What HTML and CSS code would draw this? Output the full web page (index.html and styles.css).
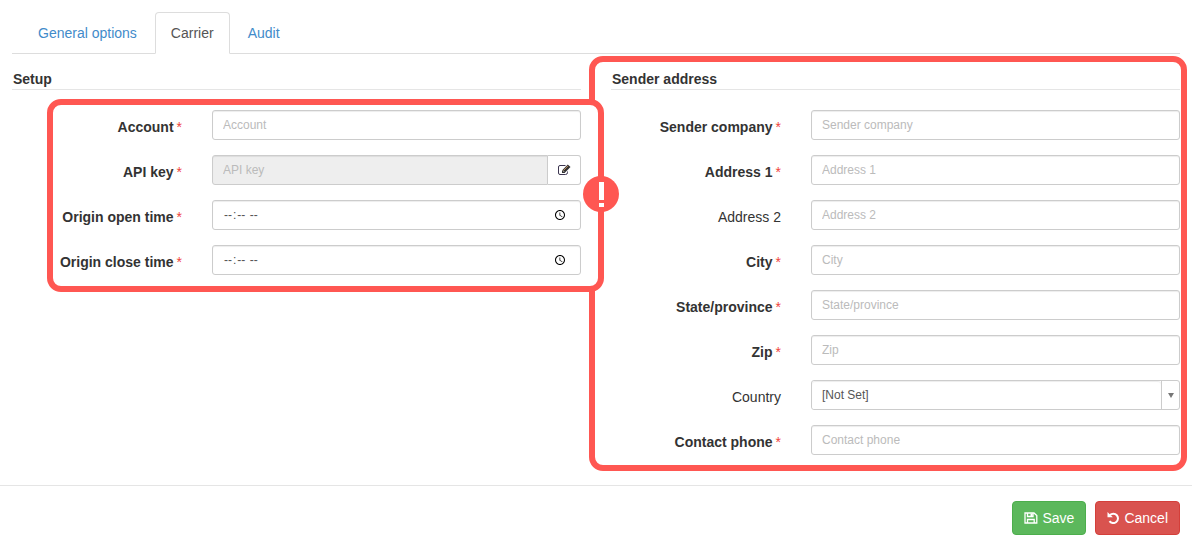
FILE: index.html
```html
<!DOCTYPE html>
<html lang="en">
<head>
  <meta charset="UTF-8">
  <meta name="viewport" content="width=device-width, initial-scale=1.0">
  <title>Carrier</title>
  <link rel="stylesheet" href="styles.css">
</head>
<body>
  <form class="page">
    <nav class="tabs">
      <a href="#general">General options</a>
      <a href="#carrier" class="active">Carrier</a>
      <a href="#audit">Audit</a>
    </nav>

    <div class="columns">
      <section class="column">
        <h2>Setup</h2>
        <div class="fields">
          <div class="row">
            <label for="account" class="required">Account</label>
            <input type="text" id="account" class="control" placeholder="Account">
          </div>
          <div class="row">
            <label for="apiKey" class="required">API key</label>
            <div class="input-group">
              <input type="text" id="apiKey" class="control" placeholder="API key" readonly>
              <button type="button" class="edit-btn" aria-label="Edit">
                <svg width="14" height="12" viewBox="0 0 14 12" fill="none">
                  <path d="M8.500 1.500H3Q1.500 1.500 1.500 3V9Q1.500 10.500 3 10.500H8.500Q10.500 10.500 10.500 8.500V7.500" stroke="#3c3550"/>
                  <path d="M5 9V6.500L10.800 0.500L13.500 3L7.600 9Z" fill="#333"/>
                  <path d="M6.500 6.500L11 1.900" stroke="#b98a5c"/>
                  <path d="M6 6.700L7.200 7.900" stroke="#fff" stroke-width="0.700"/>
                </svg>
              </button>
            </div>
          </div>
          <div class="row">
            <label for="openTime" class="required">Origin open time</label>
            <input type="time" id="openTime" class="control">
          </div>
          <div class="row">
            <label for="closeTime" class="required">Origin close time</label>
            <input type="time" id="closeTime" class="control">
          </div>
          <div class="frame frame-setup">
            <svg class="alert" width="36" height="36" viewBox="0 0 36 36">
              <circle cx="18" cy="18" r="18" fill="#ff5752"/>
              <rect x="16" y="6" width="5" height="18" fill="#fff"/>
              <rect x="16" y="27" width="5" height="4" fill="#fff"/>
            </svg>
          </div>
        </div>
      </section>

      <section class="column">
        <h2>Sender address</h2>
        <div class="fields">
          <div class="row">
            <label for="company" class="required">Sender company</label>
            <input type="text" id="company" class="control" placeholder="Sender company">
          </div>
          <div class="row">
            <label for="address1" class="required">Address 1</label>
            <input type="text" id="address1" class="control" placeholder="Address 1">
          </div>
          <div class="row">
            <label for="address2">Address 2</label>
            <input type="text" id="address2" class="control" placeholder="Address 2">
          </div>
          <div class="row">
            <label for="city" class="required">City</label>
            <input type="text" id="city" class="control" placeholder="City">
          </div>
          <div class="row">
            <label for="state" class="required">State/province</label>
            <input type="text" id="state" class="control" placeholder="State/province">
          </div>
          <div class="row">
            <label for="zip" class="required">Zip</label>
            <input type="text" id="zip" class="control" placeholder="Zip">
          </div>
          <div class="row">
            <label for="country">Country</label>
            <div class="select-box">
              <select id="country" class="control">
                <option>[Not Set]</option>
              </select>
              <span class="arrow">
                <svg width="6" height="5" viewBox="0 0 6 5"><path d="M0 0H6L3 5Z" fill="#777"/></svg>
              </span>
            </div>
          </div>
          <div class="row">
            <label for="phone" class="required">Contact phone</label>
            <input type="text" id="phone" class="control" placeholder="Contact phone">
          </div>
        </div>
        <div class="frame frame-sender"></div>
      </section>
    </div>

    <footer class="actions">
      <button type="submit" class="btn btn-save">
        <svg width="14" height="12" viewBox="0 0 14 12" fill="none" stroke="#fff" stroke-width="1.300">
          <path d="M1 1H10L12.800 3.500V11H1Z"/>
          <path d="M3.500 11V7.500H10.200V11M3.500 1V4.500H9V1"/>
          <path d="M6.500 1.500H8.500V4H6.500Z" fill="#fff" stroke="none"/>
        </svg>
        Save
      </button>
      <button type="button" class="btn btn-cancel">
        <svg width="13" height="12" viewBox="0 0 13 12">
          <path d="M3 3A4.700 4.700 0 1 1 2.500 9.200" fill="none" stroke="#fff" stroke-width="2"/>
          <path d="M0.500 0V5.300H5.800Z" fill="#fff"/>
        </svg>
        Cancel
      </button>
    </footer>
  </form>
</body>
</html>
```
FILE: styles.css
```css
* {
  box-sizing: border-box;
}
body {
  margin: 0;
  background: #fff;
  color: #333;
  font-family: "Liberation Sans", Arial, sans-serif;
  font-size: 14px;
  line-height: 20px;
}

/* tabs */
.tabs {
  display: flex;
  gap: 2px;
  margin: 12px 12px 0;
  padding-left: 10px;
  border-bottom: 1px solid #ddd;
}
.tabs a {
  padding: 10px 15px;
  margin-bottom: -1px;
  border: 1px solid transparent;
  border-radius: 4px 4px 0 0;
  color: #428bca;
  text-decoration: none;
}
.tabs .active {
  background: #fff;
  border-color: #ddd #ddd #fff;
  color: #555;
}

/* form */
.columns {
  display: grid;
  grid-template-columns: 1fr 1fr;
  gap: 30px;
  padding: 15px 12px 30px;
}
.column {
  position: relative;
}
.column:first-child {
  z-index: 1;
}
h2 {
  margin: 0 0 20px;
  padding-left: 1px;
  border-bottom: 1px solid #e5e5e5;
  font-size: 14px;
  line-height: 20px;
}
.fields {
  position: relative;
  display: grid;
  gap: 15px;
}
.row {
  display: grid;
  grid-template-columns: 170px 1fr;
  gap: 30px;
}
label {
  height: 30px;
  padding-top: 7px;
  text-align: right;
}
.required {
  font-weight: bold;
}
.required::after {
  content: "*";
  margin-left: 3px;
  color: #f0433a;
  font-weight: normal;
}
.control {
  width: 100%;
  height: 30px;
  padding: 5px 10px;
  border: 1px solid #ccc;
  border-radius: 3px;
  background: #fff;
  box-shadow: inset 0 1px 1px rgba(0,0,0,0.075);
  color: #555;
  font-family: inherit;
  font-size: 12px;
  line-height: 18px;
}
.control::placeholder {
  color: #bbb;
}
.control[readonly] {
  background: #eee;
}
.input-group {
  display: flex;
}
.input-group .control {
  flex: 1;
  border-radius: 3px 0 0 3px;
}
.edit-btn {
  display: flex;
  align-items: center;
  justify-content: center;
  width: 33px;
  height: 30px;
  padding: 0;
  border: 1px solid #ccc;
  border-left: none;
  border-radius: 0 3px 3px 0;
  background: #fff;
}
.select-box {
  display: flex;
  height: 30px;
  border: 1px solid #ccc;
  border-radius: 3px;
}
.select-box .control {
  flex: 1;
  height: 28px;
  padding: 4px 10px;
  border: none;
  appearance: none;
}
.arrow {
  display: flex;
  align-items: center;
  justify-content: center;
  width: 18px;
  border-left: 1px solid #ccc;
}

/* callout frames over the form */
.frame {
  position: absolute;
  border: 6px solid #ff5752;
  border-radius: 14px;
  pointer-events: none;
}
/* filled, so it hides the sender frame's edge but stays under the fields */
.frame-setup {
  top: -11px;
  right: -23px;
  bottom: -17px;
  left: 35px;
  z-index: -1;
  background: #fff;
}
.frame-sender {
  top: -13px;
  right: -7px;
  bottom: -16px;
  left: -22px;
}
.alert {
  position: absolute;
  top: 71px;
  right: -21px;
}

/* footer */
.actions {
  display: flex;
  justify-content: flex-end;
  gap: 9px;
  padding: 15px 12px;
  border-top: 1px solid #e5e5e5;
}
.btn {
  display: flex;
  align-items: center;
  gap: 4px;
  padding: 6px 11px;
  border: 1px solid;
  border-radius: 4px;
  color: #fff;
  font-family: inherit;
  font-size: 14px;
  line-height: 20px;
}
.btn-save {
  background: #5cb85c;
  border-color: #4cae4c;
}
.btn-cancel {
  background: #d9534f;
  border-color: #d43f3a;
}
```
